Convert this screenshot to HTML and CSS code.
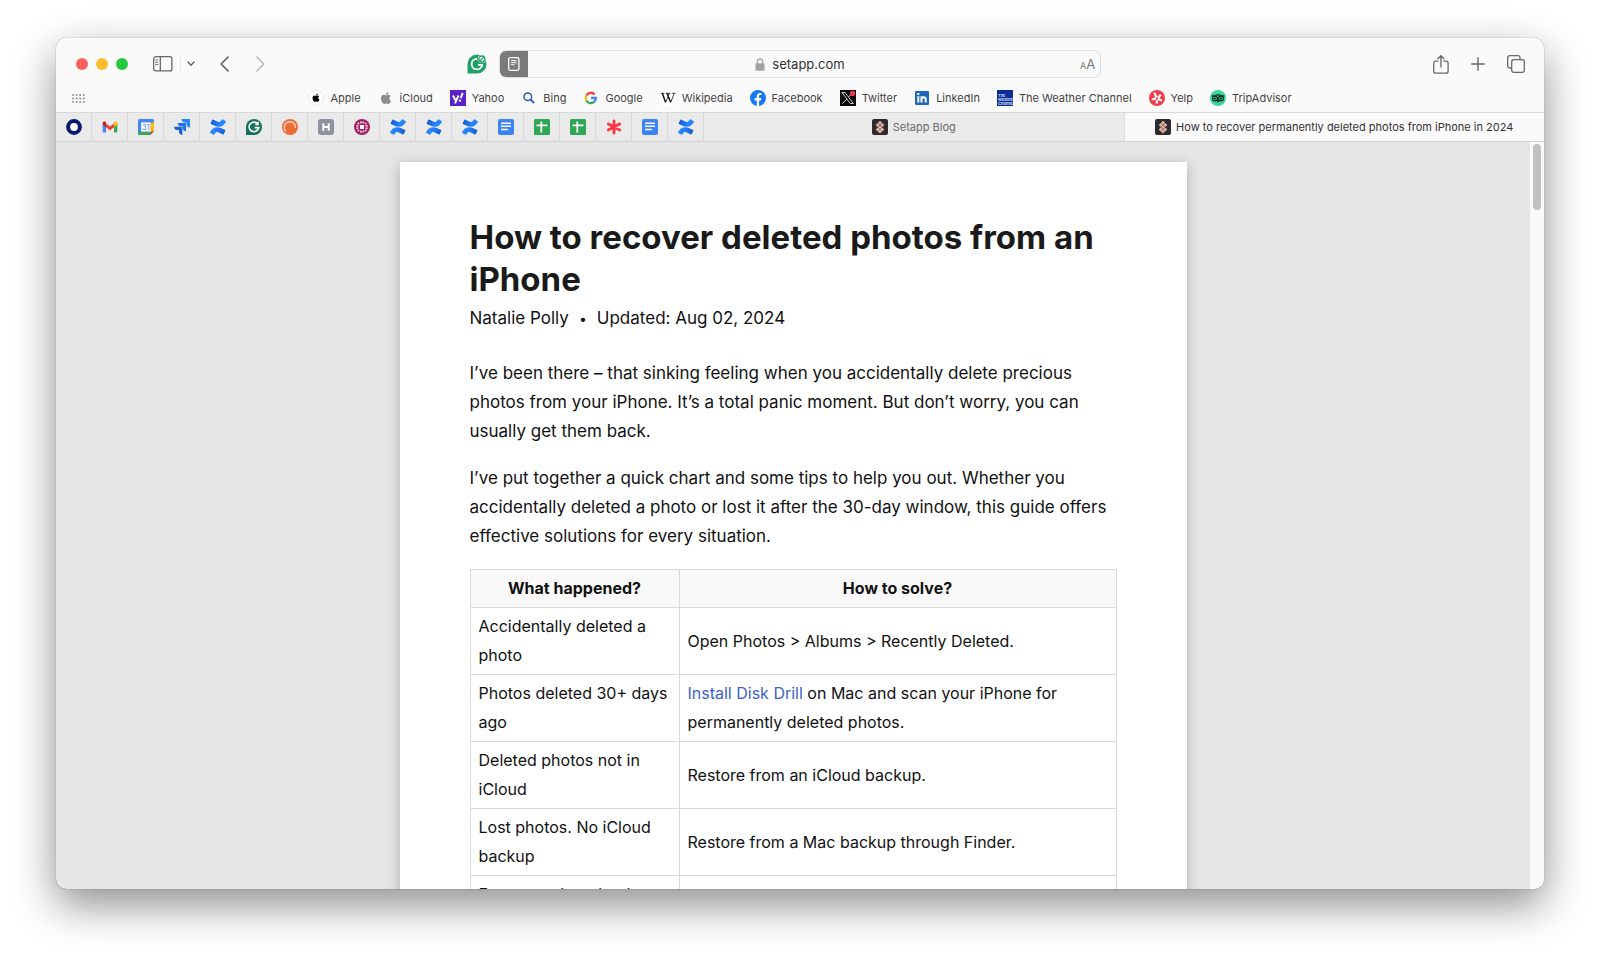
FILE: index.html
```html
<!DOCTYPE html>
<html lang="en">
<head>
<meta charset="utf-8">
<title>How to recover permanently deleted photos from iPhone in 2024</title>
<link rel="stylesheet" href="styles.css">
</head>
<body>
<svg class="sprites" aria-hidden="true">
  <defs>
    <linearGradient id="cfa" x1="0" y1="0" x2="1" y2="0"><stop offset="0" stop-color="#2684ff"/><stop offset=".4" stop-color="#2684ff"/><stop offset="1" stop-color="#1558cf"/></linearGradient>
    <linearGradient id="cfb" x1="1" y1="0" x2="0" y2="0"><stop offset="0" stop-color="#2684ff"/><stop offset=".4" stop-color="#2684ff"/><stop offset="1" stop-color="#1558cf"/></linearGradient>
  </defs>
  <symbol id="confluence" viewBox="0 0 24 24">
    <path fill="url(#cfa)" d="M.87 18.257c-.248.382-.53.875-.763 1.245a.764.764 0 0 0 .255 1.040l4.965 3.054a.764.764 0 0 0 1.058-.260c.199-.332.454-.763.733-1.221 1.967-3.247 3.945-2.853 7.508-1.146l4.957 2.337a.764.764 0 0 0 1.028-.382l2.364-5.346a.764.764 0 0 0-.382-1 599.851 599.851 0 0 1-4.965-2.361C10.911 10.970 5.224 11.185.87 18.257z"/>
    <path fill="url(#cfb)" d="M23.131 5.743c.249-.405.531-.875.764-1.250a.764.764 0 0 0-.256-1.034L18.675.404a.764.764 0 0 0-1.058.260c-.195.335-.451.763-.734 1.225-1.966 3.246-3.945 2.850-7.508 1.146L4.437.694a.764.764 0 0 0-1.027.382L1.046 6.422a.764.764 0 0 0 .382 1c1.039.490 3.105 1.467 4.965 2.361 6.698 3.246 12.392 3.029 16.738-4.040z"/>
  </symbol>
  <symbol id="docs" viewBox="0 0 16 16"><rect width="16" height="16" rx="2" fill="#3f83f3"/><path stroke="#fff" stroke-width="1.500" d="M3 4.300h10M3 7.300h10M3 10.500h7"/></symbol>
  <symbol id="sheets" viewBox="0 0 16 16"><rect width="16" height="16" rx="1.500" fill="#2fa653"/><path stroke="#fff" stroke-width="1.800" d="M2.500 6.300h11M7.300 2.500v11"/></symbol>
  <symbol id="setapp" viewBox="0 0 16 16"><rect width="16" height="16" rx="2" fill="#2c2a2e"/><g fill="#e8b3a2"><path d="M8 1.700l2 2-2 2-2-2zM5.700 4l2 2-2 2-2-2zM10.300 4l2 2-2 2-2-2zM8 6.200l2 2-2 2-2-2zM5.700 8.400l2 2-2 2-2-2zM10.300 8.400l2 2-2 2-2-2zM8 10.600l2 2-2 2-2-2z"/></g></symbol>
  <symbol id="apple" viewBox="0 0 24 24"><path d="M17.050 20.280c-.98.950-2.050.800-3.080.350-1.090-.460-2.090-.480-3.240 0-1.440.620-2.200.440-3.060-.350C2.790 15.250 3.510 7.590 9.050 7.310c1.350.070 2.290.740 3.080.800 1.180-.240 2.310-.930 3.570-.840 1.510.120 2.650.720 3.400 1.800-3.120 1.870-2.380 5.980.480 7.130-.570 1.500-1.310 2.990-2.540 4.090zM12.030 7.250c-.150-2.230 1.660-4.070 3.740-4.250.290 2.580-2.340 4.500-3.740 4.250z"/></symbol>
</svg>

<div class="window">
  <header class="chrome">
    <div class="toolbar">
      <div class="side start">
        <div class="lights"><button class="light red" aria-label="Close"></button><button class="light amber" aria-label="Minimize"></button><button class="light green" aria-label="Zoom"></button></div>
        <button class="tool sidebar" aria-label="Show sidebar"><svg width="20" height="16" viewBox="0 0 20 16" fill="none" stroke="#666"><rect x=".7" y=".7" width="18.200" height="14.200" rx="2.200" stroke-width="1.300"/><path stroke-width="1.300" d="M7.300 1v14"/><path d="M2.500 4h2.700M2.500 6.300h2.700M2.500 8.600h2.700"/></svg></button>
        <button class="tool groups" aria-label="Tab groups"><svg width="8" height="6" viewBox="0 0 8 6" fill="none" stroke="#666" stroke-width="1.400" stroke-linecap="round" stroke-linejoin="round"><path d="M1 1l3 3.200L7 1"/></svg></button>
        <button class="tool back" aria-label="Back"><svg width="9" height="16" viewBox="0 0 9 16" fill="none" stroke="#555" stroke-width="1.500" stroke-linecap="round" stroke-linejoin="round"><path d="M8 1L1.200 8 8 15"/></svg></button>
        <button class="tool forward" aria-label="Forward"><svg width="9" height="16" viewBox="0 0 9 16" fill="none" stroke="#b4b4b4" stroke-width="1.500" stroke-linecap="round" stroke-linejoin="round"><path d="M1 1l6.800 7L1 15"/></svg></button>
        <button class="tool extension" aria-label="Grammarly"><svg width="20" height="20" viewBox="0 0 20 20" fill="none"><path fill="#1fa067" d="M10 .5a9.500 9.500 0 1 1 0 19H.5V10A9.500 9.500 0 0 1 10 .5z"/><path stroke="#fff" stroke-width="1.800" d="M10 4.800A5.300 5.300 0 1 0 15.200 10.800H11"/><circle cx="14.800" cy="5" r="4.100" fill="#e9f6ef"/><circle cx="14.800" cy="5" r="3" stroke="#1fa067" stroke-width="1.300"/><path stroke="#1fa067" stroke-width="1.200" d="M12.700 7.100l4.200-4.200"/></svg></button>
      </div>
      <div class="address">
        <button class="reader" aria-label="Reader"><svg width="12" height="14" viewBox="0 0 12 14" fill="none" stroke="#fff"><rect x=".7" y=".7" width="10.200" height="12.600" rx="1.500" stroke-width="1.300"/><path d="M3 3.700h5.600M3 5.700h5.600M3 7.700h3.500"/></svg></button>
        <span class="url"><svg width="10" height="13" viewBox="0 0 10 13"><rect x=".5" y="5.300" width="9" height="7.500" rx="1.200" fill="#a2a2a2"/><path fill="none" stroke="#a2a2a2" stroke-width="1.300" d="M2.300 6V3.500a2.700 2.700 0 0 1 5.400 0V6"/></svg>setapp.com</span>
        <button class="textsize" aria-label="Text size"><small>A</small>A</button>
      </div>
      <div class="side end">
        <button class="tool" aria-label="Share"><svg width="16" height="19" viewBox="0 0 16 19" fill="none" stroke="#6a6a6a" stroke-width="1.300" stroke-linecap="round" stroke-linejoin="round"><path d="M5 6.200H2.700a2 2 0 0 0-2 2v8a2 2 0 0 0 2 2h10.400a2 2 0 0 0 2-2v-8a2 2 0 0 0-2-2H11M7.900 12V1M4.900 3.800L7.900.8l3 3"/></svg></button>
        <button class="tool" aria-label="New tab"><svg width="14" height="14" viewBox="0 0 14 14" stroke="#6a6a6a" stroke-width="1.400" stroke-linecap="round"><path d="M7 .7v12.600M.7 7h12.600"/></svg></button>
        <button class="tool" aria-label="Tab overview"><svg width="18" height="18" viewBox="0 0 18 18" fill="none" stroke="#6a6a6a" stroke-width="1.300"><rect x="4.700" y="4.700" width="12.600" height="12.600" rx="2.200"/><path d="M4.500 13H2.700a2 2 0 0 1-2-2V2.700a2 2 0 0 1 2-2H11a2 2 0 0 1 2 2v1.800"/></svg></button>
      </div>
    </div>

    <nav class="favorites" aria-label="Favorites">
      <button class="tool grid" aria-label="All favorites"><svg width="13" height="9" viewBox="0 0 13 9" stroke="#777" stroke-width="1.600" stroke-dasharray="1.600 2"><path d="M.2 1h12.500M.2 4.500h12.500M.2 8h12.500"/></svg></button>
      <div class="links">
        <a href="#"><svg width="16" height="16" viewBox="0 0 16 16"><circle cx="8" cy="8" r="7.500" fill="#fff" stroke="#e2e2e2" stroke-width=".8"/><use href="#apple" x="2.500" y="2.200" width="11" height="11"/></svg>Apple</a>
        <a href="#"><svg width="16" height="16" viewBox="0 0 16 16" fill="#8c8c8c"><use href="#apple" width="16" height="16"/></svg>iCloud</a>
        <a href="#"><svg width="16" height="16" viewBox="0 0 16 16"><rect width="16" height="16" fill="#5b22c9"/><path fill="none" stroke="#fff" stroke-width="1.900" d="M3 5.500l2.600 5M8.500 5.500L5 13.300M12.700 2.800l-2 5.300"/><circle cx="10" cy="10.600" r="1.200" fill="#fff"/></svg>Yahoo</a>
        <a href="#"><svg width="16" height="16" viewBox="0 0 16 16" fill="none" stroke="#2a5bc0" stroke-width="1.500"><circle cx="6.800" cy="6.800" r="3.800"/><path stroke-width="1.800" d="M9.500 9.500l3.700 3.700"/></svg>Bing</a>
        <a href="#"><svg width="16" height="16" viewBox="0 0 16 16" fill="none" stroke-width="2.300"><path stroke="#ea4335" d="M3.400 5.600A5 5 0 0 1 11.600 4.400"/><path stroke="#fbbc05" d="M3.400 10.400a5 5 0 0 1 0-4.800"/><path stroke="#34a853" d="M11.400 11.700a5 5 0 0 1-8-1.300"/><path stroke="#4285f4" d="M8 8h5a5 5 0 0 1-1.600 3.700"/></svg>Google</a>
        <a href="#"><svg width="16" height="16" viewBox="0 0 16 16"><rect width="16" height="16" fill="#fff"/><path stroke="#111" fill="none" stroke-width="1.500" d="M2.300 3.200l3.300 9M7 3.200l3.700 9"/><path stroke="#111" fill="none" stroke-width=".8" d="M5.700 12.300L9.400 3.500M10.800 12.300l3.400-9M.8 3.300h3.600M5.600 3.300h5M12.300 3.300h3.200"/></svg>Wikipedia</a>
        <a href="#"><svg width="16" height="16" viewBox="0 0 16 16"><circle cx="8" cy="8" r="8" fill="#1877f2"/><path fill="#fff" d="M6.800 16v-5.600H4.700V8h2.100V6.200c0-2.200 1.200-3.300 3.100-3.300.8 0 1.500.1 1.500.1v2h-1c-1 0-1.300.6-1.300 1.300V8h2.200l-.4 2.400H9.100V16z"/></svg>Facebook</a>
        <a href="#"><svg width="16" height="16" viewBox="0 0 16 16"><rect width="16" height="16" fill="#0b0b0b"/><path fill="none" stroke="#ddd" stroke-width=".9" d="M2 2.500h3l8.300 11H10.200zM2.300 13.500L7 9M8.500 7l4-4.500"/><circle cx="12.600" cy="3.400" r="2.600" fill="#f5334f"/></svg>Twitter</a>
        <a href="#"><svg width="16" height="16" viewBox="0 0 16 16"><rect x="1" y="1" width="14" height="14" rx="1" fill="#1f67bd"/><path fill="none" stroke="#fff" stroke-width="2" d="M4.300 6.300v6.300M7.500 6.300v6.300M7.500 9.500c0-3 4.200-3 4.200 0v3.100M4.300 3.100v2"/></svg>LinkedIn</a>
        <a href="#"><svg width="16" height="16" viewBox="0 0 16 16"><rect width="16" height="16" fill="#0c2c92"/><g fill="#d9e2ff" font-family="Inter, sans-serif" font-weight="600" font-size="4"><text x="1" y="7">The</text><text x="1" y="11">Weather</text><text x="1" y="15">Channel</text></g></svg>The Weather Channel</a>
        <a href="#"><svg width="16" height="16" viewBox="0 0 16 16"><circle cx="8" cy="8" r="8" fill="#f23c49"/><g stroke="#fff" stroke-width="2.200" stroke-linecap="round"><path d="M7.200 6.800L5.600 3.400M6 8.600l-2.200.6M7.800 10.500v2.200M9.800 9.300l2.200 1M9.600 7.300l1.700-2"/></g></svg>Yelp</a>
        <a href="#"><svg width="16" height="16" viewBox="0 0 16 16"><circle cx="8" cy="8" r="8" fill="#36d79a"/><g fill="none" stroke="#0b2a20" stroke-width="1.200"><circle cx="5" cy="8.500" r="2.400"/><circle cx="11" cy="8.500" r="2.400"/><path d="M1.800 5.900h2.400c2.300-1.300 5.300-1.300 7.600 0h2.400M7 10.500l1 1.200 1-1.200"/></g><circle cx="5" cy="8.500" r=".9"/><circle cx="11" cy="8.500" r=".9"/></svg>TripAdvisor</a>
      </div>
    </nav>

    <div class="tabs">
      <button class="pin" aria-label="Okta"><svg width="16" height="16" viewBox="0 0 16 16"><circle cx="8" cy="8" r="5.900" fill="#fff" stroke="#07196e" stroke-width="4"/></svg></button>
      <button class="pin" aria-label="Gmail"><svg width="16" height="16" viewBox="0 0 16 16"><path fill="#4285f4" d="M.7 4v8.500c0 .6.400 1 1 1H4V7z"/><path fill="#34a853" d="M15.300 4v8.500c0 .6-.4 1-1 1H12V7z"/><path fill="#ea4335" d="M4 4.400L8 7.500l4-3.100V8.200l-4 3-4-3z"/><path fill="#c5221f" d="M.7 4.200C.7 2.600 2.400 2 3.600 2.900L4 3.200v5L.7 5.800z"/><path fill="#fbbc04" d="M15.300 4.200c0-1.600-1.700-2.200-2.900-1.300l-.4.300v5l3.300-2.400z"/></svg></button>
      <button class="pin" aria-label="Calendar"><svg width="16" height="16" viewBox="0 0 16 16"><rect width="16" height="16" rx="1.500" fill="#4285f4"/><path fill="#fbbc04" d="M12.600 3.400H16v9.200h-3.400z"/><path fill="#34a853" d="M0 12.600h12.600V16H1.500A1.500 1.500 0 0 1 0 14.500z"/><path fill="#ea4335" d="M12.600 12.600H16L12.600 16z"/><path fill="#e9e9e9" d="M16 12.600V16h-3.400z"/><rect x="3.200" y="3.400" width="9.400" height="9.200" fill="#fff"/><text x="7.900" y="10.700" text-anchor="middle" font-family="Inter, sans-serif" font-size="7" fill="#2b6fe0">31</text></svg></button>
      <button class="pin" aria-label="Jira"><svg width="16" height="16" viewBox="0 0 16 16"><path fill="#2684ff" d="M7.500 0H16v8.500c-2 0-3.400-1.500-3.400-3.300V3.400h-1.800C9 3.400 7.500 2 7.500 0z"/><path fill="#1f74ec" d="M3.700 3.900h8.400v8.400c-2 0-3.400-1.500-3.400-3.300V7.300H7C5.100 7.300 3.700 5.900 3.700 3.900z"/><path fill="#1a62d6" d="M0 7.700h8.400V16C6.400 16 5 14.600 5 12.800v-1.700H3.300C1.500 11.100 0 9.700 0 7.700z"/></svg></button>
      <button class="pin" aria-label="Confluence"><svg width="16" height="16"><use href="#confluence"/></svg></button>
      <button class="pin" aria-label="Grammarly"><svg width="16" height="16" viewBox="0 0 16 16"><path fill="#15735a" d="M8 0a8 8 0 1 1 0 16H0V8a8 8 0 0 1 8-8z"/><path fill="none" stroke="#fff" stroke-width="1.700" d="M11.500 4.600A4.800 4.800 0 1 0 12.700 8.700H8.600M11.900 2.700v2.700H9.300"/></svg></button>
      <button class="pin" aria-label="Analytics"><svg width="16" height="16" viewBox="0 0 16 16"><circle cx="8" cy="8" r="8" fill="#ee6c37"/><path fill="none" stroke="#f8d3c2" stroke-width="1.400" d="M3.900 12.300A5.600 5.600 0 1 1 13.400 9"/></svg></button>
      <button class="pin" aria-label="Hub"><svg width="16" height="16" viewBox="0 0 16 16"><rect width="16" height="16" rx="3" fill="#8f919e"/><path stroke="#fff" stroke-width="2" d="M5.300 4.200v7.600M10.700 4.200v7.600M5.300 8h5.400"/></svg></button>
      <button class="pin" aria-label="Workspace"><svg width="16" height="16" viewBox="0 0 16 16"><circle cx="8" cy="8" r="8" fill="#a31c60"/><rect x="6" y="6" width="4" height="4" fill="#fff"/><g fill="#f6d5e4"><rect x="6" y="2.400" width="1.700" height="2"/><rect x="8.400" y="2.400" width="1.700" height="2"/><rect x="6" y="11.600" width="1.700" height="2"/><rect x="8.400" y="11.600" width="1.700" height="2"/><rect x="2.400" y="6" width="2" height="1.700"/><rect x="2.400" y="8.400" width="2" height="1.700"/><rect x="11.600" y="6" width="2" height="1.700"/><rect x="11.600" y="8.400" width="2" height="1.700"/><circle cx="4.400" cy="4.400" r="1"/><circle cx="11.600" cy="4.400" r="1"/><circle cx="4.400" cy="11.600" r="1"/><circle cx="11.600" cy="11.600" r="1"/></g></svg></button>
      <button class="pin" aria-label="Confluence"><svg width="16" height="16"><use href="#confluence"/></svg></button>
      <button class="pin" aria-label="Confluence"><svg width="16" height="16"><use href="#confluence"/></svg></button>
      <button class="pin" aria-label="Confluence"><svg width="16" height="16"><use href="#confluence"/></svg></button>
      <button class="pin" aria-label="Docs"><svg width="16" height="16"><use href="#docs"/></svg></button>
      <button class="pin" aria-label="Sheets"><svg width="16" height="16"><use href="#sheets"/></svg></button>
      <button class="pin" aria-label="Sheets"><svg width="16" height="16"><use href="#sheets"/></svg></button>
      <button class="pin" aria-label="Asterisk"><svg width="16" height="16" viewBox="0 0 16 16" stroke="#fb3640" stroke-width="2.800" stroke-linecap="round"><path d="M8 1.800v12.400M2.300 4.900l11.400 6.200M2.300 11.100l11.400-6.200"/></svg></button>
      <button class="pin" aria-label="Docs"><svg width="16" height="16"><use href="#docs"/></svg></button>
      <button class="pin" aria-label="Confluence"><svg width="16" height="16"><use href="#confluence"/></svg></button>
      <button class="tab"><svg width="16" height="16"><use href="#setapp"/></svg>Setapp Blog</button>
      <button class="tab active"><svg width="16" height="16"><use href="#setapp"/></svg>How to recover permanently deleted photos from iPhone in 2024</button>
    </div>
  </header>

  <main class="viewport">
    <div class="page">
      <article class="article">
        <h1>How to recover deleted photos from an iPhone</h1>
        <p class="byline"><span>Natalie Polly</span><span class="dot">•</span><span>Updated: Aug 02, 2024</span></p>
        <p>I’ve been there – that sinking feeling when you accidentally delete precious photos from your iPhone. It’s a total panic moment. But don’t worry, you can usually get them back.</p>
        <p>I’ve put together a quick chart and some tips to help you out. Whether you accidentally deleted a photo or lost it after the 30-day window, this guide offers effective solutions for every situation.</p>
        <table>
          <thead><tr><th scope="col">What happened?</th><th scope="col">How to solve?</th></tr></thead>
          <tbody>
            <tr><td>Accidentally deleted a photo</td><td>Open Photos &gt; Albums &gt; Recently Deleted.</td></tr>
            <tr><td>Photos deleted 30+ days ago</td><td><a href="#">Install Disk Drill</a> on Mac and scan your iPhone for permanently deleted photos.</td></tr>
            <tr><td>Deleted photos not in iCloud</td><td>Restore from an iCloud backup.</td></tr>
            <tr><td>Lost photos. No iCloud backup</td><td>Restore from a Mac backup through Finder.</td></tr>
            <tr><td>Frequent photo backup</td><td></td></tr>
          </tbody>
        </table>
      </article>
    </div>
    <div class="track"><div class="thumb"></div></div>
  </main>
</div>
</body>
</html>
```
FILE: styles.css
```css
* { box-sizing: border-box; }

body {
  margin: 0;
  height: 100vh;
  padding: 38px 56px 74px;
  background: #fff;
  font-family: Inter, "Liberation Sans", sans-serif;
  color: #111;
}

button {
  padding: 0;
  border: 0;
  background: none;
  font: inherit;
  color: inherit;
}

svg { display: block; flex: none; }
.sprites { position: absolute; width: 0; height: 0; }

.window {
  display: flex;
  flex-direction: column;
  height: 100%;
  overflow: hidden;
  border-radius: 10px;
  background: #e6e6e6;
  box-shadow: 0 0 1px rgba(0, 0, 0, .6), 0 16px 44px rgba(0, 0, 0, .45);
}

.chrome { background: #fafafa; }

.toolbar {
  display: grid;
  grid-template-columns: 1fr minmax(0, 602px) 1fr;
  align-items: center;
  padding-top: 12px;
}

.side { display: flex; align-items: center; }
.start { padding: 0 12px 0 20px; }
.end { justify-content: flex-end; gap: 22px; padding-right: 19px; }
.tool { display: flex; align-items: center; justify-content: center; }

.lights { display: flex; gap: 8px; }
.light { width: 12px; height: 12px; border-radius: 50%; }
.red { background: #fc5f5b; }
.amber { background: #fdbb2d; }
.green { background: #29c640; }

.sidebar { margin-left: 25px; }
.groups { height: 16px; margin-left: 7px; padding-left: 6px; border-left: 1px solid #e9e9e9; }
.back { margin-left: 25px; }
.forward { margin-left: 27px; }
.extension { margin-left: auto; }

.address {
  display: flex;
  align-items: center;
  height: 28px;
  overflow: hidden;
  border: 1px solid #dedede;
  border-radius: 7px;
  font-size: 13px;
  color: #333;
}
.reader {
  display: flex;
  align-items: center;
  justify-content: center;
  width: 28px;
  height: 28px;
  background: #7b7b7b;
}
.url { display: flex; flex: 1; align-items: center; justify-content: center; gap: 7px; padding-right: 8px; }
.textsize { width: 20px; font-size: 13px; color: #777; text-align: left; }
.textsize small { font-size: 9px; }

.favorites {
  display: grid;
  grid-template-columns: 1fr auto 1fr;
  align-items: center;
  height: 24px;
  margin-top: 8px;
  padding: 0 16px;
}
.grid { justify-self: start; }
.links { display: flex; gap: 17px; }
.links a {
  display: flex;
  align-items: center;
  gap: 6px;
  font-size: 11px;
  color: #444;
  text-decoration: none;
  white-space: nowrap;
}

.tabs {
  display: flex;
  height: 30px;
  margin-top: 2px;
  border-top: 1px solid #d8d8d8;
  border-bottom: 1px solid #d2d2d2;
  background: #eaeaea;
}
.pin {
  display: flex;
  flex: none;
  align-items: center;
  justify-content: center;
  width: 36px;
  border-right: 1px solid #dadada;
}
.tab {
  display: flex;
  flex: 1 1 0;
  align-items: center;
  justify-content: center;
  gap: 5px;
  min-width: 0;
  font-size: 11px;
  color: #6b6b6b;
  white-space: nowrap;
}
.active { border-left: 1px solid #dadada; background: #fafafa; color: #333; }

.viewport { display: flex; flex: 1; min-height: 0; overflow: hidden; }
.page { display: flex; flex: 1; justify-content: center; align-items: flex-start; padding: 20px 20px 0; }
.track { width: 14px; padding: 2px 3px; background: #fafafa; }
.thumb { height: 66px; border-radius: 4px; background: #c1c1c1; }

.article {
  width: 100%;
  max-width: 787px;
  padding: 54px 70px 70px;
  background: #fff;
  box-shadow: 0 3px 12px rgba(0, 0, 0, .25);
  font-size: 17px;
  line-height: 29px;
}
.article p { margin: 0 0 18px; }
.article h1 { margin: 0; font-size: 33px; line-height: 42px; color: #1a1a1a; }
.article .byline { display: flex; margin: 4px 0 26px; }
.dot { width: 28px; font-size: 14px; text-align: center; }

table { width: 100%; border-collapse: collapse; table-layout: fixed; font-size: 16px; color: #111; }
th, td { padding: 4px 8px; border: 1px solid #d9d9d9; text-align: left; }
th { background: #f9f9f9; text-align: center; }
th:first-child { width: 209px; }
td a { color: #3a62c9; text-decoration: none; }
```
